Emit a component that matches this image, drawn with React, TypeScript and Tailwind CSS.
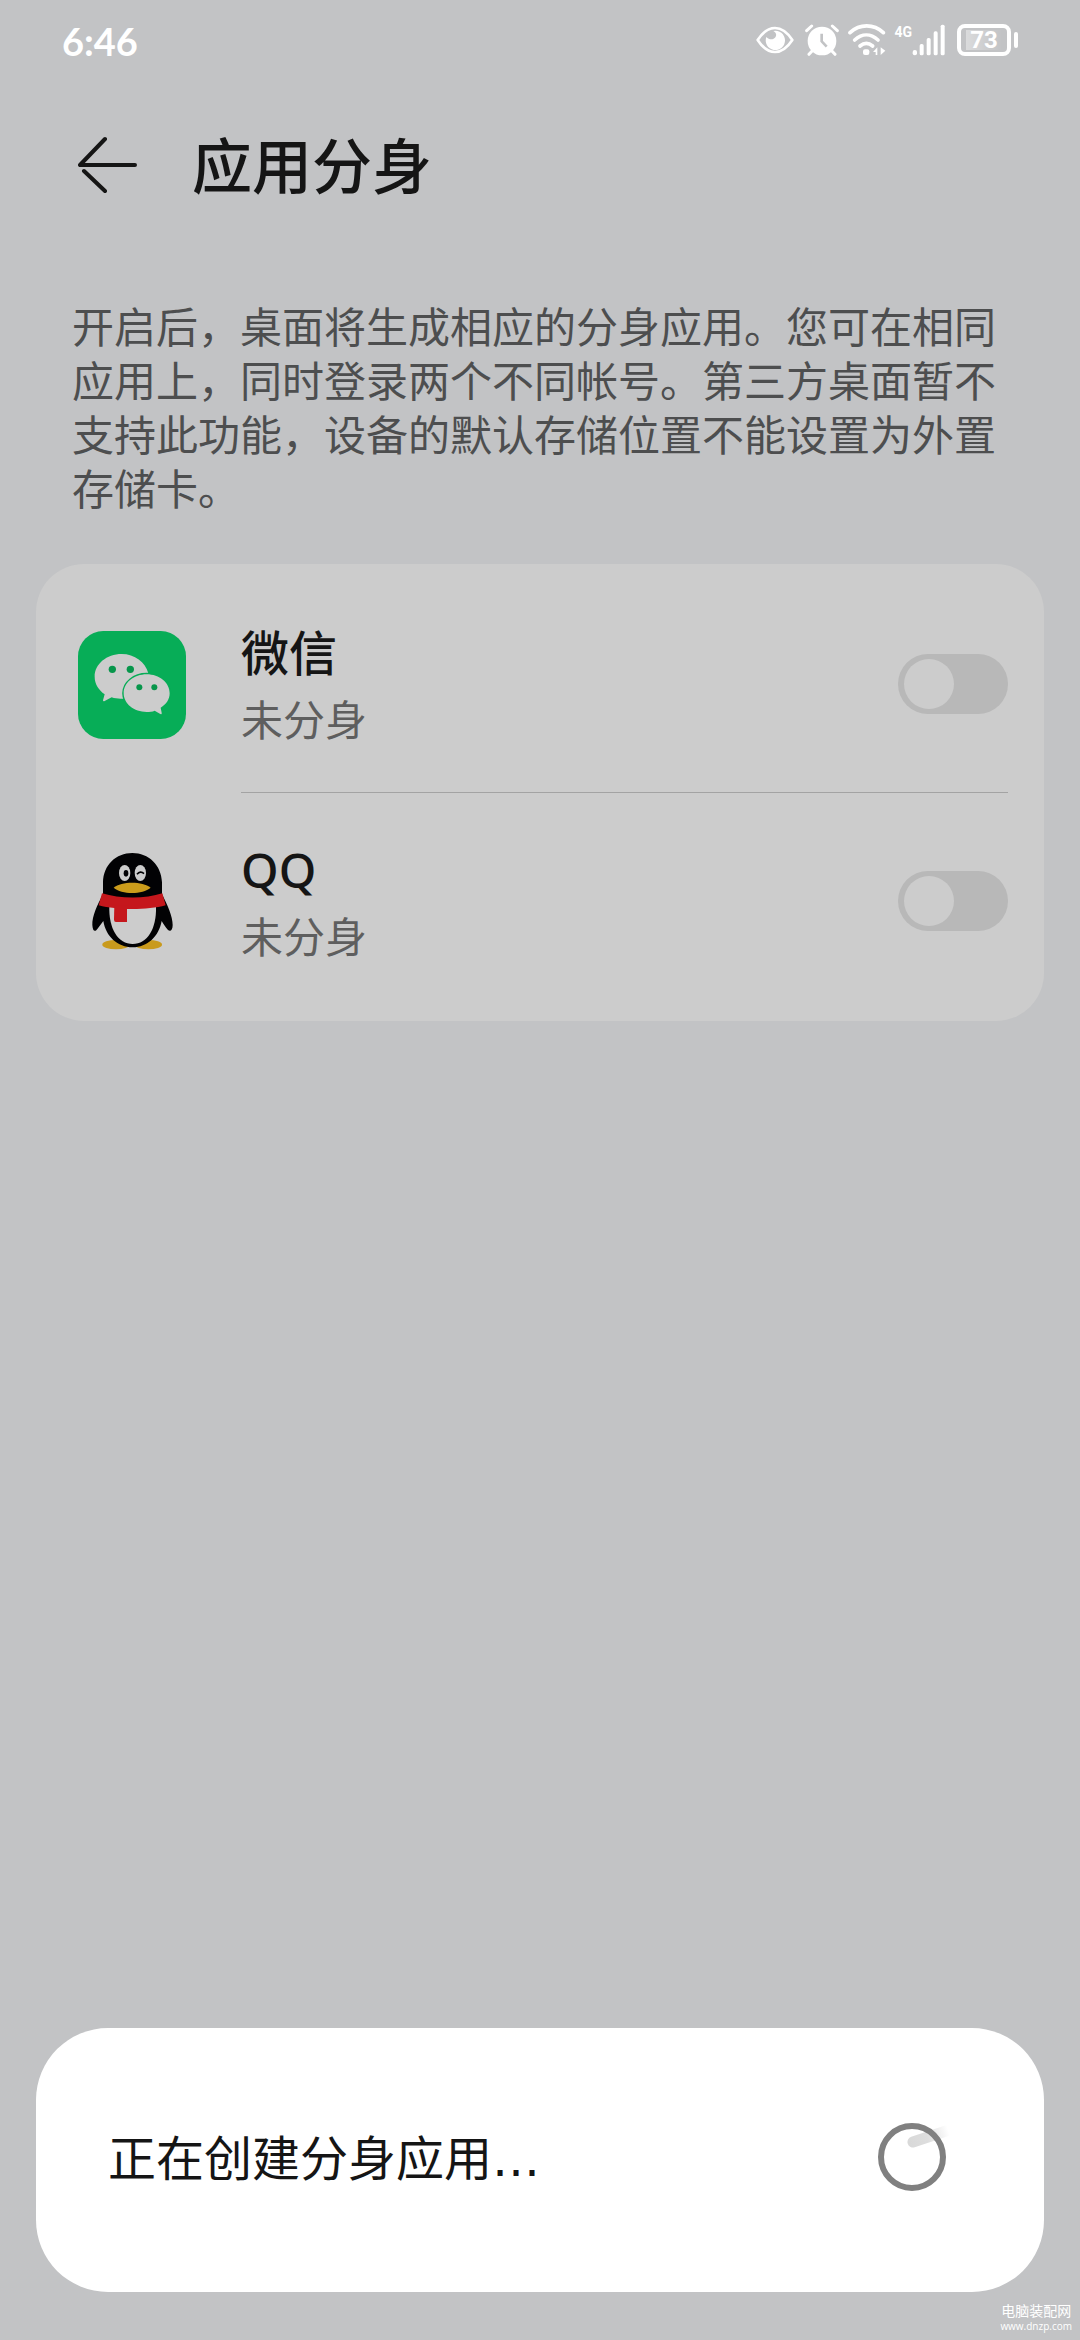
import React, { useState } from 'react'

const EyeIcon = () => (
  <svg viewBox="0 0 114 84" className="h-7 w-[38px]" fill="none">
    <path d="M5 42 C22 16 40 6 57 6 S92 16 109 42 C92 68 74 78 57 78 S22 68 5 42 Z" stroke="white" strokeWidth="8" strokeLinejoin="round" />
    <path d="M52 15 C62 20 63 30 56 36 C49 43 38 40 31 33 A29 29 0 1 0 52 15 Z" fill="white" />
  </svg>
)

const AlarmIcon = () => (
  <svg viewBox="0 0 102 96" className="h-8 w-[34px]" fill="none">
    <circle cx="51" cy="51" r="43" fill="white" />
    <path d="M5 20 L20 6 M97 20 L82 6" stroke="white" strokeWidth="9" strokeLinecap="round" />
    <path d="M22 80 L12 91 M80 80 L90 91" stroke="white" strokeWidth="9" strokeLinecap="round" />
    <path d="M50 29 V52 L65 68" stroke="#c2c3c5" strokeWidth="8" />
  </svg>
)

const WifiIcon = () => (
  <svg viewBox="0 0 114 96" className="h-8 w-[38px]" fill="none">
    <path d="M6 26 C35 -1 77 -1 106 26" stroke="white" strokeWidth="11" strokeLinecap="round" />
    <path d="M20 48 C42 28 68 28 90 48" stroke="white" strokeWidth="11" strokeLinecap="round" />
    <path d="M36 66 C48 56 62 56 74 66" stroke="white" strokeWidth="11" strokeLinecap="round" />
    <rect x="45" y="76" width="19" height="17" rx="6" fill="white" />
    <path d="M88 70 V93 H83 V84 H75 Z M98 70 L112 80 L98 93 Z" fill="white" />
  </svg>
)

const SignalIcon = () => (
  <svg viewBox="0 0 102 96" className="h-8 w-[34px]" fill="white">
    <rect x="2" y="78" width="13" height="16" rx="6" />
    <rect x="23" y="60" width="12" height="34" rx="5" />
    <rect x="44" y="42" width="12" height="52" rx="5" />
    <rect x="65" y="22" width="12" height="72" rx="5" />
    <rect x="86" y="2" width="12" height="92" rx="5" />
  </svg>
)

const WechatIcon = () => (
  <svg viewBox="54 63 324 324" className="h-[108px] w-[108px] shrink-0">
    <rect x="54" y="63" width="324" height="324" rx="76" fill="#07ad57" />
    <path d="M185 132 C140 132 104 162 104 200 C104 222 116 240 134 253 L129 271 Q129 275 134 273 L155 262 C166 266 178 267 190 266 L265 190 C256 156 224 132 185 132 Z" fill="#cccccc" />
    <path d="M260 193 C222 193 191 218 191 250 C191 281 222 306 260 306 C269 306 277 305 284 302 L301 312 Q306 314 305 308 L302 293 C319 283 329 268 329 250 C329 218 298 193 260 193 Z" fill="#cccccc" stroke="#07ad57" strokeWidth="9" paintOrder="stroke" />
    <circle cx="157" cy="178" r="11" fill="#07964b" />
    <circle cx="211" cy="178" r="11" fill="#07964b" />
    <circle cx="238" cy="232" r="9" fill="#07964b" />
    <circle cx="283" cy="232" r="9" fill="#07964b" />
  </svg>
)

const QQIcon = () => (
  <svg viewBox="54 54 324 324" className="h-[108px] w-[108px] shrink-0">
    <ellipse cx="168" cy="347" rx="41" ry="14" fill="#c99a1c" />
    <ellipse cx="265" cy="347" rx="41" ry="14" fill="#c99a1c" />
    <path d="M217 72 C168 72 130 108 129 160 L129 195 C112 228 96 262 97 288 C98 307 105 310 112 300 C118 292 124 284 130 276 C137 322 173 355 218 355 C262 355 297 322 305 276 C311 286 317 296 324 303 C331 309 338 304 338 288 C338 262 322 228 306 195 L306 160 C304 108 266 72 217 72 Z" fill="#020204" />
    <path d="M148 232 H288 C290 300 262 345 218 345 C174 345 146 300 148 232 Z" fill="#cccccc" />
    <path d="M126 193 C180 210 256 210 307 193 L317 229 C262 244 172 244 116 229 Z" fill="#c5171c" />
    <path d="M163 230 H201 V279 H168 Q162 279 162 272 Z" fill="#c5171c" />
    <ellipse cx="194" cy="132" rx="17" ry="24" fill="#cccccc" />
    <ellipse cx="241" cy="132" rx="17" ry="24" fill="#cccccc" />
    <ellipse cx="198" cy="133" rx="7" ry="10" fill="#020204" />
    <path d="M231 136 Q241 124 252 134" fill="none" stroke="#020204" strokeWidth="5" />
    <path d="M161 176 C185 156 247 156 272 176 C247 197 185 197 161 176 Z" fill="#cb9c1b" />
  </svg>
)

const Spinner = () => (
  <svg viewBox="0 0 80 80" className="h-20 w-20" fill="none">
    <defs>
      <linearGradient id="tail" gradientUnits="userSpaceOnUse" x1="34" y1="26" x2="76" y2="12">
        <stop offset="0" stopColor="#d8d8d8" />
        <stop offset="0.5" stopColor="#dedede" />
        <stop offset="1" stopColor="#ffffff" />
      </linearGradient>
    </defs>
    <path d="M41 25 L74 14" stroke="url(#tail)" strokeWidth="11" strokeLinecap="round" />
    <circle cx="40" cy="40" r="31" stroke="#808080" strokeWidth="6" />
  </svg>
)

const apps = [
  { id: 'wechat', nome: '微信', icon: <WechatIcon /> },
  { id: 'qq', nome: 'QQ', icon: <QQIcon /> },
]

const App = () => {
  const [ativos, setAtivos] = useState<string[]>([])

  const toggle = (id: string) => {
    setAtivos(ativos.includes(id) ? ativos.filter((a) => a !== id) : [...ativos, id])
  }

  return (
    <div className="relative flex min-h-screen flex-col bg-[#c2c3c5] px-9 pb-12 font-['Noto_Sans_CJK_SC',sans-serif] text-[#151515]">
      <div className="flex h-20 items-center justify-between px-[26px] text-white">
        <span className="pt-0.5 font-['Lato',sans-serif] text-[38px] font-bold leading-none">6:46</span>
        <div className="flex items-center">
          <EyeIcon />
          <div className="ml-[11px]"><AlarmIcon /></div>
          <div className="ml-[9px]"><WifiIcon /></div>
          <span className="ml-2 h-8 font-['Roboto',sans-serif] text-sm font-bold leading-4">4G</span>
          <SignalIcon />
          <div className="ml-[11px] flex h-8 w-[54px] items-center justify-center rounded-lg border-4 border-white">
            <span className="bg-linear-to-r from-white/40 to-transparent px-1 font-['Roboto',sans-serif] text-2xl font-bold leading-5">73</span>
          </div>
          <div className="ml-[3px] h-4 w-1 rounded-sm bg-white"></div>
        </div>
      </div>

      <header className="flex h-[170px] items-center gap-[54px] px-[42px]">
        <button type="button" aria-label="返回">
          <svg viewBox="0 0 60 60" className="h-[60px] w-[60px]" fill="none" stroke="#151515" strokeWidth="4" strokeLinecap="round" strokeLinejoin="round">
            <path d="M27 4 L2 30 H57 M6 36 L27 56" />
          </svg>
        </button>
        <h1 className="pb-1 text-[60px] font-medium leading-none">应用分身</h1>
      </header>

      <p className="px-9 pt-12 text-[42px] leading-[54px] text-[#4d4e4f]">
        开启后，桌面将生成相应的分身应用。您可在相同应用上，同时登录两个不同帐号。第三方桌面暂不支持此功能，设备的默认存储位置不能设置为外置存储卡。
      </p>

      <section className="mt-[50px] rounded-[48px] bg-[#cccccc] py-3 pl-[42px] pr-9">
        {apps.map((app, i) => (
          <div key={app.id} className="flex items-center gap-[55px]">
            {app.icon}
            <div className={i > 0 ? 'flex h-[216px] flex-1 items-center justify-between' : 'flex h-[217px] flex-1 items-center justify-between border-b border-[#a3a3a3]'}>
              <label htmlFor={app.id} className="flex flex-col gap-2">
                <span className="font-['Noto_Sans','Noto_Sans_CJK_SC',sans-serif] text-5xl font-medium leading-[60px]">{app.nome}</span>
                <span className="text-[42px] leading-[54px] text-[#5e5e5e]">未分身</span>
              </label>
              <input
                id={app.id}
                type="checkbox"
                checked={ativos.includes(app.id)}
                onChange={() => toggle(app.id)}
                className="flex h-[60px] w-[110px] appearance-none items-center rounded-full bg-[#b8b8b8] px-[6px] before:h-[50px] before:w-[50px] before:rounded-full before:bg-[#cccccc] checked:justify-end"
              />
            </div>
          </div>
        ))}
      </section>

      <div role="dialog" aria-label="创建分身" className="mt-auto flex h-[264px] items-center justify-between rounded-[72px] bg-white pb-1.5 pl-[72px] pr-[92px]">
        <p className="text-5xl leading-[60px]">
          正在创建分身应用<span className="font-['DejaVu_Sans',sans-serif]">…</span>
        </p>
        <Spinner />
      </div>

      <div className="absolute bottom-2 right-2 flex flex-col items-center text-white">
        <span className="text-sm leading-5">电脑装配网</span>
        <span className="font-['Open_Sans',sans-serif] text-[10px] leading-3">www.dnzp.com</span>
      </div>
    </div>
  )
}

export default App
